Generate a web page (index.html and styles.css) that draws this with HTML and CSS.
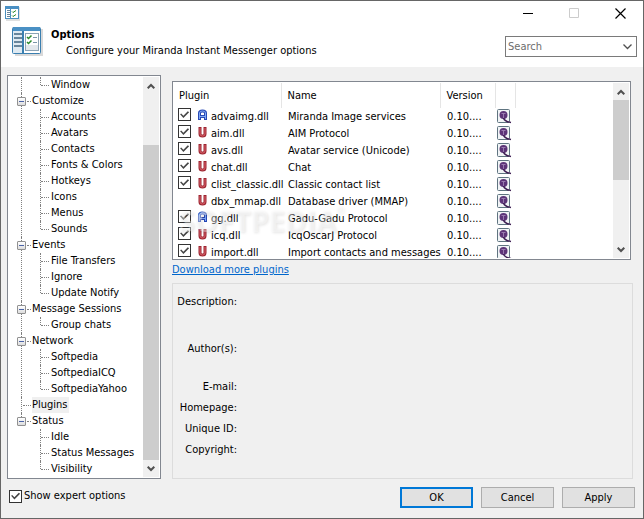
FILE: index.html
```html
<!DOCTYPE html>
<html lang="en">
<head>
    <meta charset="UTF-8">
    <meta name="viewport" content="width=device-width, initial-scale=1.0">
    <title>Options</title>
    <link rel="stylesheet" href="styles.css">
</head>
<body>

<!-- Shared icons -->
<svg class="defs" aria-hidden="true">
    <symbol id="options" viewBox="0 0 32 32">
        <path d="M3 3h28v27H3z" fill="#000" opacity=".15"/>
        <rect x=".5" y="1.500" width="28" height="26" rx="1" fill="#fff" stroke="#3a7fb0"/>
        <path d="M1 1h27v4H1z" fill="#4a90c4"/>
        <path d="M1 5h9v22H1z" fill="#dfeaf2"/>
        <path d="M11 5v22" stroke="#3a7fb0" stroke-width="2"/>
        <path d="M2 8h8M2 12h8M2 16h8M2 20h8" stroke="#68869c" stroke-width="2"/>
        <rect x="13.500" y="7.500" width="13" height="17" fill="#fff" stroke="#8ba3b5"/>
        <path d="M14 19h12v5H14z" fill="#e3e8ec"/>
        <path d="M15 11l1.500 1.500 3-3M15 16l1.500 1.500 3-3" fill="none" stroke="#2b8a2b" stroke-width="1.500"/>
        <path d="M21 11.500h4M21 16.500h4" stroke="#7d96a8"/>
    </symbol>
    <symbol id="options-small" viewBox="0 0 15 15">
        <path d="M1 1h14v14H1z" fill="#000" opacity=".12"/>
        <rect x=".5" y=".5" width="13" height="12" fill="#fff" stroke="#4a8fbe"/>
        <path d="M0 0h14v3H0z" fill="#4a90c4"/>
        <path d="M5.500 3v10" stroke="#4a8fbe"/>
        <path d="M2 4.500h3M2 6.500h3M2 8.500h3M2 10.500h3" stroke="#68869c"/>
        <path d="M7 5.500l1 1 3-2M7 9.500l1 1 3-2" fill="none" stroke="#2b8a2b"/>
    </symbol>
    <symbol id="ansi" viewBox="0 0 9 13">
        <path d="M1.500 11V4Q1.500 2 4.500 2T7.500 4V11M2 7.500h5" fill="none" stroke="#2748b5" stroke-width="3"/>
        <path d="M1.500 10V4Q1.500 2 4.500 2T7.500 4V10M2 7.500h5" fill="none" stroke="#7fa8f5"/>
    </symbol>
    <symbol id="unicode" viewBox="0 0 9 13">
        <path d="M2 1v7Q2 10 4.500 10T7 8V1" fill="none" stroke="#9c2430" stroke-width="3"/>
        <path d="M2 2v6Q2 10 4.500 10T7 8V2" fill="none" stroke="#d9626a" stroke-width="1"/>
    </symbol>
    <symbol id="info" viewBox="0 0 15 15">
        <rect x=".5" y=".5" width="12" height="13" rx="1" fill="#f1f4f6" stroke="#5f7480"/>
        <circle cx="6.500" cy="6" r="4" fill="#5d3478"/>
        <path d="M4.500 4.500h4M6.500 4.500V9" stroke="#9a7bb0"/>
        <path d="M6.500 9Q7.500 12.500 14 13.500" fill="none" stroke="#3d1d52" stroke-width="1.500"/>
    </symbol>
    <symbol id="up" viewBox="0 0 8 6"><path d="M.7 5.300L4 2l3.300 3.300" fill="none" stroke="#505050" stroke-width="2"/></symbol>
    <symbol id="down" viewBox="0 0 8 6"><path d="M.7.700L4 4 7.300.700" fill="none" stroke="#505050" stroke-width="2"/></symbol>
</svg>

<div class="window">
    <header class="header">
        <div class="titlebar">
            <svg class="app-icon"><use href="#options-small"/></svg>
            <div class="window-buttons">
                <button aria-label="Minimize"><svg viewBox="0 0 11 11"><path d="M0 5.500h10" stroke="#000"/></svg></button>
                <button aria-label="Maximize" disabled><svg viewBox="0 0 11 11"><path d="M.5.500h9v9h-9z" fill="none" stroke="#ccc"/></svg></button>
                <button aria-label="Close"><svg viewBox="0 0 11 11"><path d="M.5.500l10 10M10.500.500l-10 10" stroke="#000" stroke-width="1.200"/></svg></button>
            </div>
        </div>
        <div class="banner">
            <svg class="banner-icon"><use href="#options"/></svg>
            <div class="banner-text">
                <h1>Options</h1>
                <p>Configure your Miranda Instant Messenger options</p>
            </div>
            <div class="search">
                <input type="text" placeholder="Search" aria-label="Search">
                <button aria-label="Show search history"><svg viewBox="0 0 9 6"><path d="M.5.500l4 4 4-4" fill="none" stroke="#505050" stroke-width="1.300"/></svg></button>
            </div>
        </div>
    </header>

    <main class="main">
        <nav class="tree-box">
            <ul class="tree">
                <li>
                    <ul><li>Window</li></ul>
                </li>
                <li>
                    <span class="node">Customize</span>
                    <ul>
                        <li>Accounts</li>
                        <li>Avatars</li>
                        <li>Contacts</li>
                        <li>Fonts &amp; Colors</li>
                        <li>Hotkeys</li>
                        <li>Icons</li>
                        <li>Menus</li>
                        <li>Sounds</li>
                    </ul>
                </li>
                <li>
                    <span class="node">Events</span>
                    <ul>
                        <li>File Transfers</li>
                        <li>Ignore</li>
                        <li>Update Notify</li>
                    </ul>
                </li>
                <li>
                    <span class="node">Message Sessions</span>
                    <ul><li>Group chats</li></ul>
                </li>
                <li>
                    <span class="node">Network</span>
                    <ul>
                        <li>Softpedia</li>
                        <li>SoftpediaICQ</li>
                        <li>SoftpediaYahoo</li>
                    </ul>
                </li>
                <li>
                    <span class="leaf"><span class="selected">Plugins</span></span>
                </li>
                <li>
                    <span class="node">Status</span>
                    <ul>
                        <li>Idle</li>
                        <li>Status Messages</li>
                        <li>Visibility</li>
                    </ul>
                </li>
            </ul>
            <div class="scrollbar tree-scroll">
                <button aria-label="Scroll up"><svg><use href="#up"/></svg></button>
                <div class="track"><div class="thumb"></div></div>
                <button aria-label="Scroll down"><svg><use href="#down"/></svg></button>
            </div>
        </nav>

        <section class="content">
            <div class="list-box">
                <div class="list">
                    <table>
                        <thead>
                            <tr><th class="col-plugin">Plugin</th><th class="col-name">Name</th><th class="col-version">Version</th><th class="col-info"></th><th></th></tr>
                        </thead>
                        <tbody id="plugins"></tbody>
                    </table>
                </div>
                <div class="scrollbar list-scroll">
                    <button aria-label="Scroll up"><svg><use href="#up"/></svg></button>
                    <div class="track"><div class="thumb"></div></div>
                    <button aria-label="Scroll down"><svg><use href="#down"/></svg></button>
                </div>
                <div class="watermark">SOFTPEDIA<sup>®</sup></div>
            </div>
            <a class="more" href="#">Download more plugins</a>
            <dl class="details">
                <dt class="tall">Description:</dt>
                <dt class="medium">Author(s):</dt>
                <dt>E-mail:</dt>
                <dt>Homepage:</dt>
                <dt>Unique ID:</dt>
                <dt>Copyright:</dt>
            </dl>
        </section>
    </main>

    <footer class="footer">
        <label class="expert"><input type="checkbox" checked>Show expert options</label>
        <div class="actions">
            <button class="default">OK</button>
            <button>Cancel</button>
            <button>Apply</button>
        </div>
    </footer>
</div>

<script src="script.js"></script>
</body>
</html>
```
FILE: styles.css
```css
*, *::before, *::after {
    box-sizing: border-box;
}
body {
    margin: 0;
    font: 11px/16px "DejaVu Sans Condensed", Tahoma, sans-serif;
    color: #000;
}
button, input {
    font: inherit;
    color: inherit;
    margin: 0;
}
ul, dl, h1, p {
    margin: 0;
    padding: 0;
}
.defs {
    position: absolute;
    width: 0;
    height: 0;
}

.window {
    min-height: 100vh;
    display: flex;
    flex-direction: column;
    border: 1px solid #666;
    background: #f0f0f0;
}
.header {
    background: #fff;
    padding-bottom: 9px;
}
.titlebar {
    display: flex;
    justify-content: space-between;
    height: 25px;
    padding-left: 4px;
}
.app-icon {
    width: 15px;
    height: 15px;
    margin-top: 5px;
}
.window-buttons {
    display: flex;
}
.window-buttons button {
    width: 46px;
    height: 25px;
    padding: 0;
    border: none;
    background: none;
}
.window-buttons svg {
    display: block;
    width: 11px;
    height: 11px;
    margin: 0 auto;
}
.banner {
    display: flex;
    height: 32px;
    padding: 0 6px 0 11px;
}
.banner-icon {
    width: 32px;
    height: 32px;
}
.banner-text {
    flex: 1;
    padding: 1px 0 0 7px;
}
.banner h1 {
    font-size: 11px;
    line-height: 16px;
}
.banner p {
    line-height: 16px;
    padding-left: 15px;
}
.search {
    display: flex;
    width: 132px;
    height: 21px;
    margin-top: 10px;
    border: 1px solid #7a7a7a;
}
.search input {
    flex: 1;
    min-width: 0;
    padding: 0 2px;
    border: none;
    outline: none;
    background: none;
}
.search input::placeholder {
    color: #6d6d6d;
    opacity: 1;
}
.search button {
    width: 18px;
    padding: 0;
    border: none;
    background: none;
}
.search svg {
    display: block;
    width: 9px;
    height: 6px;
    margin: 0 auto;
}

.main {
    flex: 1;
    display: flex;
    gap: 11px;
    padding: 8px 10px 0 6px;
}

/* Tree */
.tree-box {
    flex: 0 0 154px;
    display: flex;
    justify-content: space-between;
    padding: 1px;
    border: 1px solid #828790;
    background: #fff;
}
.tree, .tree ul {
    list-style: none;
}
.tree li {
    position: relative;
    white-space: nowrap;
}
.tree > li {
    padding-left: 23px;
}
.tree li::before, .tree ul li::after, .leaf::before {
    content: "";
    position: absolute;
    border: 0 dotted #808080;
}
.tree > li::before {
    left: 12px;
    top: 0;
    bottom: 0;
    border-left-width: 1px;
}
.tree > li:last-child::before {
    bottom: auto;
    height: 8px;
}
.tree ul li {
    padding-left: 19px;
}
.tree ul li::before {
    left: 8px;
    top: 0;
    height: 16px;
    border-left-width: 1px;
}
.tree ul li:last-child::before {
    height: 8px;
}
.tree ul li::after {
    left: 9px;
    top: 8px;
    width: 8px;
    border-top-width: 1px;
}
.node, .leaf {
    display: block;
}
.node::before {
    content: "";
    position: absolute;
    left: 8px;
    top: 4px;
    width: 9px;
    height: 9px;
    border: 1px solid #919191;
    border-radius: 1px;
    background: linear-gradient(#4b63a7, #4b63a7) center / 5px 1px no-repeat, linear-gradient(#fff, #ddd);
}
.node::after {
    content: "";
    position: absolute;
    left: 18px;
    top: 8px;
    width: 4px;
    border-top: 1px dotted #808080;
}
.leaf::before {
    left: 14px;
    top: 8px;
    width: 8px;
    border-top-width: 1px;
}
.selected {
    display: inline-block;
    padding-right: 2px;
    background: #f0f0f0;
}

/* Scrollbars */
.scrollbar {
    display: flex;
    flex-direction: column;
    flex: 0 0 16px;
    background: #f0f0f0;
}
.scrollbar button {
    height: 17px;
    padding: 0;
    border: none;
    background: none;
}
.scrollbar svg {
    display: block;
    width: 8px;
    height: 6px;
    margin: 0 auto;
}
.track {
    flex: 1;
    display: flex;
    flex-direction: column;
}
.thumb {
    background: #cdcdcd;
}
.tree-scroll .track {
    justify-content: flex-end;
}
.tree-scroll .thumb {
    height: 86%;
}
.list-scroll .thumb {
    height: 57%;
}

/* Plugin list */
.content {
    flex: 1;
    min-width: 0;
    display: flex;
    flex-direction: column;
    padding-top: 6px;
}
.list-box {
    position: relative;
    display: flex;
    height: 179px;
    margin-right: 2px;
    padding: 1px;
    border: 1px solid #828790;
    background: #fff;
}
.list {
    flex: 1;
    overflow: hidden;
}
table {
    width: 100%;
    table-layout: fixed;
    border-collapse: collapse;
}
th {
    height: 25px;
    padding: 0 6px;
    border-right: 1px solid #e5e5e5;
    font-weight: normal;
    text-align: left;
}
th:first-child {
    padding-left: 5px;
}
th:last-child {
    border: none;
}
td {
    height: 17px;
    padding: 0 7px;
    line-height: 17px;
    white-space: nowrap;
}
.col-plugin {
    width: 107px;
}
.col-name {
    width: 159px;
}
.col-version {
    width: 55px;
}
.col-info {
    width: 20px;
}
.plugin {
    display: flex;
    height: 17px;
}
td:first-child {
    padding: 0 0 0 4px;
}
td:nth-child(4) {
    padding: 0 0 0 2px;
}
.plugin svg {
    flex: none;
    width: 9px;
    height: 13px;
    margin: 1px 4px 0 7px;
}
.info {
    display: block;
    width: 15px;
    height: 15px;
}
input[type="checkbox"] {
    appearance: none;
    flex: none;
    width: 13px;
    height: 13px;
    border: 1px solid #333;
    background: #fff;
}
input[type="checkbox"]:checked::before {
    content: "";
    display: block;
    width: 11px;
    height: 11px;
    background: #444;
    clip-path: polygon(10% 48%, 20% 40%, 40% 62%, 80% 20%, 92% 30%, 40% 82%);
}
.no-check {
    flex: none;
    width: 13px;
}
.watermark {
    position: absolute;
    left: 6px;
    top: 123px;
    font: bold 29px/32px "Open Sans", sans-serif;
    color: rgba(255, 255, 255, .4);
    text-shadow: 1px 1px 3px rgba(0, 0, 0, .1);
    pointer-events: none;
}
.watermark sup {
    font-size: 10px;
    line-height: 10px;
    vertical-align: top;
}
.more {
    align-self: flex-start;
    line-height: 20px;
    color: #0066cc;
}

/* Details */
.details {
    flex: 1;
    margin-top: 3px;
    padding: 10px 0 0;
    border: 1px solid #dcdcdc;
}
.details dt {
    width: 64px;
    height: 21px;
    text-align: right;
}
.details .tall {
    height: 47px;
}
.details .medium {
    height: 38px;
}

/* Footer */
.footer {
    display: flex;
    justify-content: space-between;
    padding: 8px 8px 10px;
}
.expert {
    display: flex;
    align-items: center;
    gap: 2px;
    height: 18px;
}
.actions {
    display: flex;
    gap: 8px;
}
.actions button {
    width: 73px;
    height: 21px;
    padding: 0;
    border: 1px solid #adadad;
    background: #e1e1e1;
}
.actions .default {
    border: 2px solid #0078d7;
}
```
FILE: script.js
```js
const plugins = [
    ['advaimg.dll', 'Miranda Image services', 'ansi', true],
    ['aim.dll', 'AIM Protocol', 'unicode', true],
    ['avs.dll', 'Avatar service (Unicode)', 'unicode', true],
    ['chat.dll', 'Chat', 'unicode', true],
    ['clist_classic.dll', 'Classic contact list', 'unicode', true],
    ['dbx_mmap.dll', 'Database driver (MMAP)', 'unicode', false],
    ['gg.dll', 'Gadu-Gadu Protocol', 'ansi', true],
    ['icq.dll', 'IcqOscarJ Protocol', 'unicode', true],
    ['import.dll', 'Import contacts and messages', 'unicode', true]
];

document.getElementById('plugins').innerHTML = plugins.map(([file, name, icon, checkable]) => `
    <tr>
        <td><label class="plugin">
            ${checkable ? '<input type="checkbox" checked>' : '<span class="no-check"></span>'}
            <svg><use href="#${icon}"/></svg>${file}
        </label></td>
        <td>${name}</td>
        <td>0.10....</td>
        <td><svg class="info"><use href="#info"/></svg></td>
        <td></td>
    </tr>`).join('');
```
